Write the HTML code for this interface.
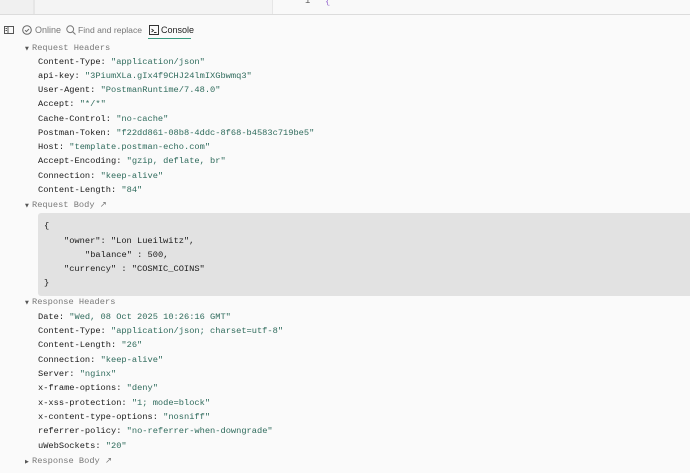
<!DOCTYPE html>
<html><head><meta charset="utf-8"><style>
html,body{margin:0;padding:0;width:690px;height:473px;overflow:hidden;background:#fafafa;position:relative}
.m{font-family:"Liberation Mono",monospace;font-size:8.7px;position:absolute;white-space:pre;line-height:12px}
.k{color:#1a1a1a}
.v{color:#2f6b5c}
.h{color:#7a7a7a;font-family:"Liberation Mono",monospace}
.s{font-family:"Liberation Sans",sans-serif;font-size:9px;position:absolute;color:#777;line-height:12px}
.tri{position:absolute;font-size:5px;color:#555;font-family:"DejaVu Sans",sans-serif}
</style></head><body>
<div style="position:absolute;left:0;top:0;width:690px;height:14px;background:#f9f9f9;border-bottom:1px solid #dcdcdc"></div>
<div style="position:absolute;left:0;top:0;width:33px;height:14px;background:#f0f0f0;border-right:2px solid #e6e6e6"></div>
<div style="position:absolute;left:35px;top:0;width:237px;height:14px;background:#f4f4f4;border-right:1px solid #e6e6e6"></div>
<div class="m" style="left:305px;top:-5px;color:#555">1</div>
<div class="m" style="left:325px;top:-4px;color:#9a6fd0">{</div>

<svg style="position:absolute;left:4px;top:25px" width="10" height="10" viewBox="0 0 10 10"><rect x="0.5" y="1.5" width="9" height="7" fill="none" stroke="#555"/><line x1="4" y1="1.5" x2="4" y2="8.5" stroke="#555"/><line x1="1.5" y1="3.5" x2="3" y2="3.5" stroke="#555"/><line x1="1.5" y1="5.5" x2="3" y2="5.5" stroke="#555"/></svg>
<svg style="position:absolute;left:22px;top:25px" width="10" height="10" viewBox="0 0 10 10"><circle cx="5" cy="5" r="4.3" fill="none" stroke="#666"/><path d="M3 5.2l1.4 1.4L7 4" fill="none" stroke="#666"/></svg>
<div class="s" style="left:35px;top:24px">Online</div>
<svg style="position:absolute;left:66px;top:25px" width="10" height="10" viewBox="0 0 10 10"><circle cx="4.2" cy="4.2" r="3.4" fill="none" stroke="#777"/><line x1="6.6" y1="6.6" x2="9.5" y2="9.5" stroke="#777"/></svg>
<div class="s" style="left:78px;top:24px;font-size:8.6px">Find and replace</div>
<svg style="position:absolute;left:149px;top:25px" width="10" height="10" viewBox="0 0 10 10"><rect x="0.5" y="0.5" width="9" height="9" fill="none" stroke="#333"/><path d="M2.5 4l2 1.5-2 1.5M5 7.5h2.5" fill="none" stroke="#333"/></svg>
<div class="s" style="left:161px;top:24px;color:#222">Console</div>
<div style="position:absolute;left:148px;top:38px;width:43px;height:1px;background:#3a9a80"></div>

<span class="tri" style="left:25px;top:46px">▼</span>
<div class="m h" style="left:32px;top:42px">Request Headers</div>
<div class="m" style="left:38px;top:56px"><span class="k">Content-Type: </span><span class="v">"application/json"</span></div>
<div class="m" style="left:38px;top:70px"><span class="k">api-key: </span><span class="v">"3PiumXLa.gIx4f9CHJ24lmIXGbwmq3"</span></div>
<div class="m" style="left:38px;top:84px"><span class="k">User-Agent: </span><span class="v">"PostmanRuntime/7.48.0"</span></div>
<div class="m" style="left:38px;top:98px"><span class="k">Accept: </span><span class="v">"*/*"</span></div>
<div class="m" style="left:38px;top:113px"><span class="k">Cache-Control: </span><span class="v">"no-cache"</span></div>
<div class="m" style="left:38px;top:127px"><span class="k">Postman-Token: </span><span class="v">"f22dd861-08b8-4ddc-8f68-b4583c719be5"</span></div>
<div class="m" style="left:38px;top:141px"><span class="k">Host: </span><span class="v">"template.postman-echo.com"</span></div>
<div class="m" style="left:38px;top:155px"><span class="k">Accept-Encoding: </span><span class="v">"gzip, deflate, br"</span></div>
<div class="m" style="left:38px;top:170px"><span class="k">Connection: </span><span class="v">"keep-alive"</span></div>
<div class="m" style="left:38px;top:184px"><span class="k">Content-Length: </span><span class="v">"84"</span></div>

<span class="tri" style="left:25px;top:203px">▼</span>
<div class="m h" style="left:32px;top:199px">Request Body ↗</div>
<div style="position:absolute;left:38px;top:213px;width:660px;height:83px;background:#e2e2e2;border-radius:3px"></div>
<div class="m k" style="left:44px;top:220px">{</div>
<div class="m k" style="left:64px;top:235px">"owner": "Lon Lueilwitz",</div>
<div class="m k" style="left:85px;top:249px">"balance" : 500,</div>
<div class="m k" style="left:64px;top:263px">"currency" : "COSMIC_COINS"</div>
<div class="m k" style="left:44px;top:277px">}</div>

<span class="tri" style="left:25px;top:300px">▼</span>
<div class="m h" style="left:32px;top:296px">Response Headers</div>
<div class="m" style="left:38px;top:311px"><span class="k">Date: </span><span class="v">"Wed, 08 Oct 2025 10:26:16 GMT"</span></div>
<div class="m" style="left:38px;top:325px"><span class="k">Content-Type: </span><span class="v">"application/json; charset=utf-8"</span></div>
<div class="m" style="left:38px;top:339px"><span class="k">Content-Length: </span><span class="v">"26"</span></div>
<div class="m" style="left:38px;top:354px"><span class="k">Connection: </span><span class="v">"keep-alive"</span></div>
<div class="m" style="left:38px;top:368px"><span class="k">Server: </span><span class="v">"nginx"</span></div>
<div class="m" style="left:38px;top:382px"><span class="k">x-frame-options: </span><span class="v">"deny"</span></div>
<div class="m" style="left:38px;top:397px"><span class="k">x-xss-protection: </span><span class="v">"1; mode=block"</span></div>
<div class="m" style="left:38px;top:411px"><span class="k">x-content-type-options: </span><span class="v">"nosniff"</span></div>
<div class="m" style="left:38px;top:425px"><span class="k">referrer-policy: </span><span class="v">"no-referrer-when-downgrade"</span></div>
<div class="m" style="left:38px;top:440px"><span class="k">uWebSockets: </span><span class="v">"20"</span></div>

<span class="tri" style="left:25px;top:459px">▶</span>
<div class="m h" style="left:32px;top:455px">Response Body ↗</div>
</body></html>
